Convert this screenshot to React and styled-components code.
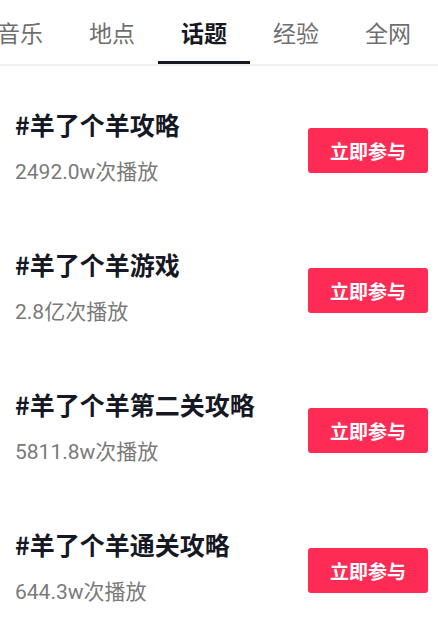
import React from "react";
import styled, { createGlobalStyle } from "styled-components";

const GlobalStyle = createGlobalStyle`
  body {
    margin: 0;
    background: #fff;
    font-family: "Noto Sans CJK SC", "Noto Sans", sans-serif;
    overflow: hidden;
  }
`;

const Page = styled.div`
  width: 438px;
  height: 629px;
  overflow: hidden;
  background: #fff;
`;

const TabBar = styled.div`
  display: flex;
  margin-left: -26px;
  height: 64px;
  border-bottom: 2px solid #f0f0f0;
`;

const Tab = styled.div`
  width: 92px;
  flex-shrink: 0;
  display: flex;
  flex-direction: column;
  align-items: center;
  justify-content: flex-end;
  font-size: 23px;
  line-height: 1;
  color: ${p => (p.$active ? "#161823" : "#6f6f6f")};
  font-weight: ${p => (p.$active ? 700 : 400)};
`;

const TabLabel = styled.span`
  padding-bottom: 17px;
`;

const Underline = styled.div`
  width: 92px;
  height: 3px;
  background: ${p => (p.$active ? "#161823" : "transparent")};
`;

const List = styled.div`
  padding-top: 14px;
`;

const Row = styled.div`
  height: 140px;
  display: flex;
  align-items: center;
  justify-content: space-between;
  padding: 0 10px 0 15px;
`;

const Info = styled.div`
  display: flex;
  flex-direction: column;
  gap: 20px;
  margin-bottom: 6px;
`;

const Title = styled.div`
  font-size: 25px;
  font-weight: 700;
  line-height: 30px;
  color: #161823;
`;

const Plays = styled.div`
  font-family: "Roboto", "Noto Sans CJK SC", sans-serif;
  font-size: 21px;
  line-height: 26px;
  color: #7a7a7a;
`;

const JoinButton = styled.button`
  width: 120px;
  height: 45px;
  border: none;
  border-radius: 3px;
  background: #fe2c55;
  color: #fff;
  font-family: inherit;
  font-size: 19px;
  font-weight: 700;
`;

const tabs = ["音乐", "地点", "话题", "经验", "全网"];

const topics = [
  { title: "#羊了个羊攻略", plays: "2492.0w次播放" },
  { title: "#羊了个羊游戏", plays: "2.8亿次播放" },
  { title: "#羊了个羊第二关攻略", plays: "5811.8w次播放" },
  { title: "#羊了个羊通关攻略", plays: "644.3w次播放" },
];

export default function App() {
  return (
    <Page>
      <GlobalStyle />
      <TabBar>
        {tabs.map(t => (
          <Tab key={t} $active={t === "话题"}>
            <TabLabel>{t}</TabLabel>
            <Underline $active={t === "话题"} />
          </Tab>
        ))}
      </TabBar>
      <List>
        {topics.map(t => (
          <Row key={t.title}>
            <Info>
              <Title>{t.title}</Title>
              <Plays>{t.plays}</Plays>
            </Info>
            <JoinButton>立即参与</JoinButton>
          </Row>
        ))}
      </List>
    </Page>
  );
}
